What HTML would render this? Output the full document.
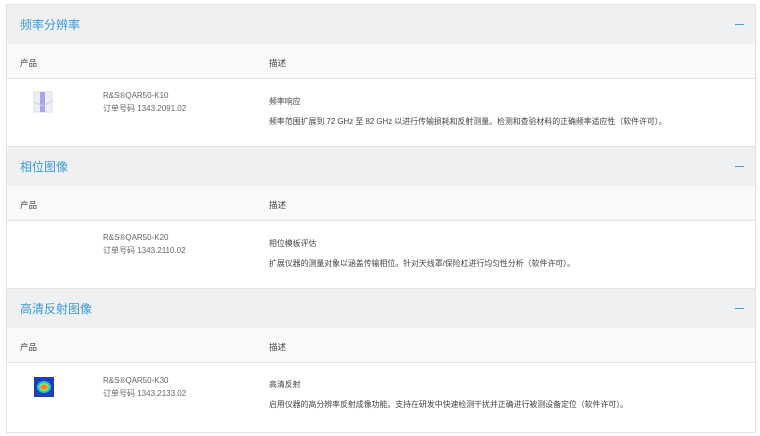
<!DOCTYPE html>
<html><head><meta charset="utf-8"><style>
body{margin:0;background:#fff;font-family:"Liberation Sans","Noto Sans CJK SC",sans-serif;width:760px;height:436px;overflow:hidden;position:relative}
.box{position:absolute;left:6px;top:4px;width:750px;height:429px;border:1px solid #e2e4e6;box-sizing:border-box}
.hd{position:absolute;left:7px;right:5px;height:40px;background:#eef0f2;border-bottom:1px solid #dfe1e3}
.hd span{position:absolute;left:13px;top:11px;font-size:12px;color:#3a9ad6}
.hd i{position:absolute;right:11px;top:19px;width:9px;height:1px;background:#4a9ee0}
.ch{position:absolute;left:7px;right:5px;height:34px;background:#f8f9f9;border-bottom:1px solid #e2e4e6;font-size:8.5px;color:#444}
.ch b{position:absolute;top:13px;font-weight:normal}
.ct{position:absolute;left:7px;right:5px;background:#fff;font-size:8px;color:#666}
.ct div{position:absolute;white-space:nowrap}
.d{color:#444;font-size:7.9px}
</style></head><body>
<div class="box"></div>

<div class="hd" style="top:5px"><span>频率分辨率</span><i></i></div>
<div class="ch" style="top:44px"><b style="left:13px">产品</b><b style="left:262px">描述</b></div>
<div class="ct" style="top:79px;height:67px">
<svg style="position:absolute;left:24px;top:11px" width="24" height="24"><rect x="3" y="2" width="18" height="20" fill="#eeeef8" stroke="#ddd"/><rect x="9" y="2" width="5" height="20" fill="#a9a6ee"/><path d="M3 12 L12 16 L21 11" stroke="#ccc" fill="none"/></svg>
<div style="left:96px;top:12px">R&amp;S®QAR50-K10</div>
<div style="left:96px;top:24px">订单号码 1343.2091.02</div>
<div class="d" style="left:262px;top:17px">频率响应</div>
<div class="d" style="left:262px;top:37px">频率范围扩展到 72 GHz 至 82 GHz 以进行传输损耗和反射测量。检测和查验材料的正确频率适应性（软件许可）。</div>
</div>

<div class="hd" style="top:146px;border-top:1px solid #e2e4e6"><span>相位图像</span><i></i></div>
<div class="ch" style="top:186px"><b style="left:13px">产品</b><b style="left:262px">描述</b></div>
<div class="ct" style="top:221px;height:67px">
<div style="left:96px;top:12px">R&amp;S®QAR50-K20</div>
<div style="left:96px;top:24px">订单号码 1343.2110.02</div>
<div class="d" style="left:262px;top:17px">相位模板评估</div>
<div class="d" style="left:262px;top:37px">扩展仪器的测量对象以涵盖传输相位。针对天线罩/保险杠进行均匀性分析（软件许可）。</div>
</div>

<div class="hd" style="top:288px;border-top:1px solid #e2e4e6"><span>高清反射图像</span><i></i></div>
<div class="ch" style="top:328px"><b style="left:13px">产品</b><b style="left:262px">描述</b></div>
<div class="ct" style="top:363px;height:68px">
<svg style="position:absolute;left:26px;top:11px" width="22" height="24"><rect x="1" y="3" width="20" height="20" fill="#1e3fb8"/><ellipse cx="11" cy="13" rx="7" ry="6" fill="#22c0d8"/><ellipse cx="11" cy="13" rx="5" ry="4" fill="#9ee04a"/><ellipse cx="11" cy="13" rx="3.5" ry="2.5" fill="#f08a2a"/></svg>
<div style="left:96px;top:13px">R&amp;S®QAR50-K30</div>
<div style="left:96px;top:25px">订单号码 1343.2133.02</div>
<div class="d" style="left:262px;top:16px">高清反射</div>
<div class="d" style="left:262px;top:36px">启用仪器的高分辨率反射成像功能。支持在研发中快速检测干扰并正确进行被测设备定位（软件许可）。</div>
</div>
</body></html>
